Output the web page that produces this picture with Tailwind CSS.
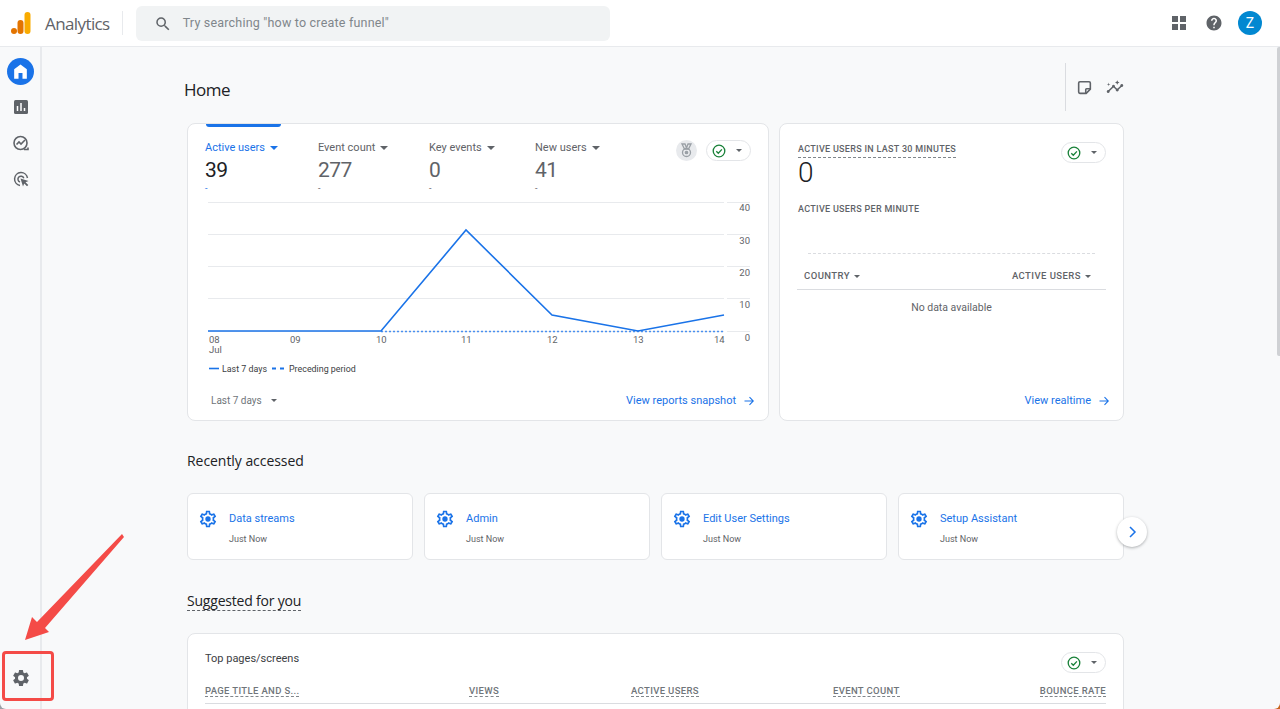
<!DOCTYPE html>
<html>
<head>
    <meta charset="UTF-8">
    <meta name="viewport" content="width=device-width, initial-scale=1.0">
    <title>Analytics Home</title>
    <script src="https://cdn.jsdelivr.net/npm/@tailwindcss/browser@4"></script>
</head>
<body class="bg-white font-['Roboto',sans-serif] text-[#5f6368] h-[709px] overflow-hidden relative">
    <!-- top bar -->
    <header class="h-[47px] bg-white border-b border-[#e8eaed] flex items-center pl-[11px] pr-[18px]">
        <svg class="w-[20px] h-[24px] mb-[1px]" viewBox="0 0 20 24">
            <rect x="13.5" y="1" width="6" height="22" rx="3" fill="#f9ab00"/>
            <rect x="6.5" y="9" width="6" height="14" rx="3" fill="#e37400"/>
            <circle cx="3" cy="20" r="3" fill="#e37400"/>
        </svg>
        <span class="ml-[14px] text-[17px] text-[#5f6368] font-['Open_Sans',sans-serif] leading-none tracking-[-0.6px]">Analytics</span>
        <div class="w-px h-[24px] bg-[#e8eaed] ml-[12px]"></div>
        <div class="ml-[13px] mt-[1px] w-[474px] h-[35px] bg-[#f1f3f4] rounded-[6px] flex items-center pl-[18px]">
            <svg class="w-[18px] h-[18px]" viewBox="0 0 24 24" fill="#5f6368"><path d="M15.5 14h-.79l-.28-.27A6.47 6.47 0 0 0 16 9.5 6.5 6.5 0 1 0 9.5 16c1.61 0 3.09-.59 4.23-1.57l.27.28v.79l5 4.99L20.49 19l-4.99-5zm-6 0C7.01 14 5 11.99 5 9.5S7.01 5 9.5 5 14 7.01 14 9.5 11.99 14 9.5 14z"/></svg>
            <span class="ml-[11px] text-[12.5px] tracking-[0.2px] text-[#80868b]">Try searching "how to create funnel"</span>
        </div>
        <div class="ml-auto flex items-center">
            <svg class="w-[16px] h-[16px]" viewBox="0 0 16 16" fill="#5f6368">
                <rect x="1" y="1" width="6" height="6"/><rect x="9" y="1" width="6" height="6"/><rect x="1" y="9" width="6" height="6"/><rect x="9" y="9" width="6" height="6"/>
            </svg>
            <svg class="w-[18px] h-[18px] ml-[18px]" viewBox="0 0 24 24" fill="#5f6368"><path d="M12 2C6.48 2 2 6.48 2 12s4.48 10 10 10 10-4.48 10-10S17.52 2 12 2zm1 17h-2v-2h2v2zm2.07-7.75-.9.92C13.45 12.9 13 13.5 13 15h-2v-.5c0-1.1.45-2.1 1.17-2.83l1.24-1.26c.37-.36.59-.86.59-1.41 0-1.1-.9-2-2-2s-2 .9-2 2H8c0-2.21 1.79-4 4-4s4 1.79 4 4c0 .88-.36 1.68-.93 2.25z"/></svg>
            <div class="w-[24px] h-[24px] ml-[15px] rounded-full bg-[#0288d1] text-white text-[14px] flex items-center justify-center">Z</div>
        </div>
    </header>

    <div class="flex h-[662px]">
        <!-- left rail -->
        <aside class="w-[42px] bg-[#f8f9fa] border-r-2 border-[#e8eaed] flex flex-col items-center pt-[11px] pb-[21px] pl-[1px]">
            <div class="w-[27px] h-[27px] rounded-full bg-[#1a73e8] flex items-center justify-center">
                <svg class="w-[19px] h-[19px]" viewBox="0 0 24 24" fill="#fff"><path d="M12 3 4 9v12h5.5v-7h5v7H20V9z"/></svg>
            </div>
            <svg class="w-[18px] h-[18px] mt-[13px]" viewBox="0 0 18 18"><rect x="2" y="2" width="14" height="14" rx="1.5" fill="#5f6368"/><path d="M5.5 8v5M9 5v8M12.5 10v3" stroke="#fff" stroke-width="1.5"/></svg>
            <svg class="w-[18px] h-[18px] mt-[18px]" viewBox="0 0 18 18" fill="none" stroke="#5f6368" stroke-width="1.6"><circle cx="8.5" cy="9" r="6.5"/><path d="m4.5 10.5 2.5-2.5 2 2 4-4"/><path d="M12 15.5h4v-2" /></svg>
            <svg class="w-[18px] h-[18px] mt-[18px]" viewBox="0 0 18 18" fill="none" stroke="#5f6368" stroke-width="1.5"><path d="M8 15.5A6.5 6.5 0 1 1 15.5 8"/><path d="M8 12a3 3 0 1 1 3.8-3.8"/><path d="m8.5 8.5 8 2.5-3 1.2 2.8 2.8-1.3 1.3-2.8-2.8-1.2 3z" fill="#5f6368" stroke="none"/></svg>
            <svg class="w-[20px] h-[20px] mt-auto" viewBox="0 0 24 24" fill="#5f6368"><path d="M19.14 12.94c.04-.3.06-.61.06-.94 0-.32-.02-.64-.07-.94l2.03-1.58a.49.49 0 0 0 .12-.61l-1.92-3.32a.488.488 0 0 0-.59-.22l-2.39.96c-.5-.38-1.03-.7-1.62-.94l-.36-2.54a.484.484 0 0 0-.48-.41h-3.84c-.24 0-.43.17-.47.41l-.36 2.54c-.59.24-1.13.57-1.62.94l-2.39-.96c-.22-.08-.47 0-.59.22L2.74 8.87c-.12.21-.08.47.12.61l2.03 1.58c-.05.3-.09.63-.09.94s.02.64.07.94l-2.03 1.58a.49.49 0 0 0-.12.61l1.92 3.32c.12.22.37.29.59.22l2.39-.96c.5.38 1.03.7 1.62.94l.36 2.54c.05.24.24.41.48.41h3.84c.24 0 .44-.17.47-.41l.36-2.54c.59-.24 1.13-.56 1.62-.94l2.39.96c.22.08.47 0 .59-.22l1.92-3.32c.12-.22.07-.47-.12-.61l-2.01-1.58zM12 15.6A3.6 3.6 0 1 1 12 8.4a3.6 3.6 0 0 1 0 7.2z"/></svg>
        </aside>

        <!-- main -->
        <main class="flex-1 bg-[#f8f9fa] pl-[145px] w-[1238px] overflow-hidden">
            <div class="w-[937px] h-[76px] flex items-start">
                <h1 class="text-[17px] leading-[24px] text-[#202124] font-['Open_Sans',sans-serif] -ml-[3px] mt-[31px] tracking-[-0.5px]">Home</h1>
                <div class="ml-auto w-[59px] h-[48px] mt-[16px] border-l border-[#dadce0] flex items-center pl-[11px] gap-[14px]">
                    <svg class="w-[15px] h-[15px]" viewBox="0 0 18 18" fill="none" stroke="#5f6368" stroke-width="1.9"><path d="M3.5 2h11a1.5 1.5 0 0 1 1.5 1.5V11l-5 5H3.5A1.5 1.5 0 0 1 2 14.5v-11A1.5 1.5 0 0 1 3.5 2z"/><path d="M16 10.5h-4.5a1 1 0 0 0-1 1V16"/></svg>
                    <svg class="w-[18px] h-[18px]" viewBox="0 0 24 24" fill="#5f6368"><path d="M21 8c-1.45 0-2.26 1.44-1.93 2.51l-3.55 3.56c-.3-.09-.74-.09-1.04 0l-2.55-2.55C12.27 10.45 11.46 9 10 9c-1.45 0-2.27 1.44-1.93 2.52l-4.56 4.55C2.44 15.74 1 16.55 1 18c0 1.1.9 2 2 2 1.45 0 2.26-1.44 1.93-2.51l4.55-4.56c.3.09.74.09 1.04 0l2.55 2.55C12.73 16.55 13.54 18 15 18c1.45 0 2.27-1.44 1.93-2.52l3.56-3.55c1.07.33 2.51-.48 2.51-1.93 0-1.1-.9-2-2-2z"/><path d="m15 9 .94-2.07L18 6l-2.06-.93L15 3l-.92 2.07L12 6l2.08.93zM3.5 11 4 9l2-.5L4 8l-.5-2L3 8l-2 .5L3 9z"/></svg>
                </div>
            </div>

            <!-- overview cards -->
            <div class="flex gap-[10px]">
                <section class="w-[582px] h-[298px] bg-white border border-[#e3e5e8] rounded-[8px] relative shrink-0">
                    <div class="absolute left-[18px] top-0 w-[75px] h-[3px] bg-[#1a73e8] rounded-b-[3px]"></div>
                    <div class="flex items-start pl-[17px] pt-[17px]">
                        <div class="w-[113px]">
                            <div class="text-[11px] leading-[13px] text-[#1a73e8] flex items-center">Active users<span class="ml-[5px] border-x-[4px] border-t-[4px] border-x-transparent border-t-[#1a73e8]"></span></div>
                            <div class="text-[21px] leading-[26px] mt-[3px] text-[#202124] tracking-[-0.5px]">39</div>
                            <div class="text-[9px] leading-[10px] text-[#1a73e8]">-</div>
                        </div>
                        <div class="w-[111px]">
                            <div class="text-[11px] leading-[13px] flex items-center">Event count<span class="ml-[5px] border-x-[4px] border-t-[4px] border-x-transparent border-t-[#5f6368]"></span></div>
                            <div class="text-[21px] leading-[26px] mt-[3px] tracking-[-0.5px]">277</div>
                            <div class="text-[9px] leading-[10px]">-</div>
                        </div>
                        <div class="w-[106px]">
                            <div class="text-[11px] leading-[13px] flex items-center">Key events<span class="ml-[5px] border-x-[4px] border-t-[4px] border-x-transparent border-t-[#5f6368]"></span></div>
                            <div class="text-[21px] leading-[26px] mt-[3px] tracking-[-0.5px]">0</div>
                            <div class="text-[9px] leading-[10px]">-</div>
                        </div>
                        <div class="w-[100px]">
                            <div class="text-[11px] leading-[13px] flex items-center">New users<span class="ml-[5px] border-x-[4px] border-t-[4px] border-x-transparent border-t-[#5f6368]"></span></div>
                            <div class="text-[21px] leading-[26px] mt-[3px] tracking-[-0.5px]">41</div>
                            <div class="text-[9px] leading-[10px]">-</div>
                        </div>
                        <div class="ml-auto mr-[17px] flex items-center gap-[9px] -mt-[1px]">
                            <div class="w-[21px] h-[21px] rounded-full bg-[#e8eaed] flex items-center justify-center">
                                <svg class="w-[13px] h-[15px]" viewBox="0 0 13 15" fill="none" stroke="#9aa0a6" stroke-width="1.3"><path d="M2 1h3l1.5 4L8 1h3L8.5 6h-4z"/><circle cx="6.5" cy="9.5" r="4"/><circle cx="6.5" cy="9.5" r="1.2" fill="#9aa0a6"/></svg>
                            </div>
                            <div class="w-[45px] h-[21px] rounded-full bg-white border border-[#e3e5e8] flex items-center pl-[5px]">
                                <svg class="w-[14px] h-[14px]" viewBox="0 0 14 14" fill="none" stroke="#188038" stroke-width="1.3"><circle cx="7" cy="7" r="5.8"/><path d="m4.3 7.2 2 2 3.6-3.8"/></svg>
                                <span class="ml-[10px] border-x-[3.5px] border-t-[3.5px] border-x-transparent border-t-[#5f6368]"></span>
                            </div>
                        </div>
                    </div>
                    <svg class="absolute left-0 top-0" width="580" height="256" font-family="Roboto, sans-serif" font-size="9.5" fill="#5f6368">
                        <g stroke="#e8eaed" stroke-width="1">
                            <path d="M20 78.5H536M20 110.5H536M20 142.5H536M20 174.5H536M20 207.5H536"/>
                            <path d="M539 78.5H562M539 110.5H562M539 142.5H562M539 174.5H562M539 207.5H562"/>
                        </g>
                        <path d="M193 207.5H536" fill="none" stroke="#4a90f0" stroke-width="1.4" stroke-dasharray="2 2"/>
                        <path d="M20 207H193L278 106 364 191 450 207 536 191" fill="none" stroke="#1a73e8" stroke-width="1.6"/>
                        <text x="562" y="87" text-anchor="end">40</text>
                        <text x="562" y="120" text-anchor="end">30</text>
                        <text x="562" y="152" text-anchor="end">20</text>
                        <text x="562" y="184" text-anchor="end">10</text>
                        <text x="562" y="217" text-anchor="end">0</text>
                        <text x="21" y="219">08</text>
                        <text x="21" y="229">Jul</text>
                        <text x="102" y="219">09</text>
                        <text x="188" y="219">10</text>
                        <text x="273" y="219">11</text>
                        <text x="359" y="219">12</text>
                        <text x="445" y="219">13</text>
                        <text x="526" y="219">14</text>
                        <path d="M21 244.5h10" stroke="#1a73e8" stroke-width="1.6"/>
                        <text x="34" y="248" fill="#3c4043" font-size="8.9">Last 7 days</text>
                        <path d="M84 244.5h4M92 244.5h4" stroke="#1a73e8" stroke-width="2"/>
                        <text x="101" y="248" fill="#3c4043" font-size="8.9">Preceding period</text>
                    </svg>
                    <div class="absolute left-[23px] right-[14px] bottom-[11px] flex items-center justify-between">
                        <div class="flex items-center text-[10px] text-[#70757a]">Last 7 days<span class="ml-[9px] border-x-[3.5px] border-t-[3.5px] border-x-transparent border-t-[#5f6368]"></span></div>
                        <a class="flex items-center text-[11px] text-[#1a73e8]">View reports snapshot
                            <svg class="w-[10px] h-[10px] ml-[8px]" viewBox="0 0 10 10" fill="none" stroke="#1a73e8" stroke-width="1.1"><path d="M0.5 5h8.5M5.5 1.2 9.3 5 5.5 8.8"/></svg>
                        </a>
                    </div>
                </section>

                <section class="w-[345px] h-[298px] bg-white border border-[#e3e5e8] rounded-[8px] relative shrink-0">
                    <div class="flex justify-between pl-[18px] pr-[17px] pt-[19px]">
                        <div>
                            <div class="text-[9px] leading-[13px] font-medium tracking-[0.3px] border-b border-dashed border-[#80868b] pb-[1px] w-fit">ACTIVE USERS IN LAST 30 MINUTES</div>
                            <div class="text-[28px] leading-[30px] text-[#202124] font-light">0</div>
                            <div class="text-[9px] leading-[13px] font-medium tracking-[0.3px] mt-[15px]">ACTIVE USERS PER MINUTE</div>
                        </div>
                        <div class="w-[45px] h-[21px] -mt-[1px] rounded-full bg-white border border-[#e3e5e8] flex items-center pl-[5px]">
                            <svg class="w-[14px] h-[14px]" viewBox="0 0 14 14" fill="none" stroke="#188038" stroke-width="1.3"><circle cx="7" cy="7" r="5.8"/><path d="m4.3 7.2 2 2 3.6-3.8"/></svg>
                            <span class="ml-[10px] border-x-[3.5px] border-t-[3.5px] border-x-transparent border-t-[#5f6368]"></span>
                        </div>
                    </div>
                    <div class="mx-[28px] mt-[37px] border-t border-dashed border-[#dadce0]"></div>
                    <div class="mx-[17px] mt-[16px] pl-[7px] pr-[15px] pb-[7px] flex justify-between border-b border-[#dadce0] text-[9.5px] font-medium tracking-[0.45px] leading-[12px]">
                        <span class="flex items-center">COUNTRY<span class="ml-[4px] border-x-[3px] border-t-[3px] border-x-transparent border-t-[#5f6368]"></span></span>
                        <span class="flex items-center">ACTIVE USERS<span class="ml-[4px] border-x-[3px] border-t-[3px] border-x-transparent border-t-[#5f6368]"></span></span>
                    </div>
                    <div class="text-center text-[10.5px] mt-[10px]">No data available</div>
                    <a class="absolute right-[14px] bottom-[11px] flex items-center text-[11px] text-[#1a73e8]">View realtime
                        <svg class="w-[10px] h-[10px] ml-[8px]" viewBox="0 0 10 10" fill="none" stroke="#1a73e8" stroke-width="1.1"><path d="M0.5 5h8.5M5.5 1.2 9.3 5 5.5 8.8"/></svg>
                    </a>
                </section>
            </div>

            <!-- recently accessed -->
            <h2 class="text-[14px] leading-[18px] text-[#202124] font-['Open_Sans',sans-serif] mt-[31px] tracking-[-0.05px]">Recently accessed</h2>
            <div class="flex gap-[11px] mt-[23px] relative w-[937px]">
                <div class="w-[226px] h-[67px] bg-white border border-[#e3e5e8] rounded-[6px] flex pl-[10px] pt-[16px]">
                    <svg class="w-[20px] h-[20px] -mt-[1px] shrink-0" viewBox="0 0 24 24" fill="#1a73e8"><path d="M19.43 12.98c.04-.32.07-.64.07-.98 0-.34-.03-.66-.07-.98l2.11-1.65c.19-.15.24-.42.12-.64l-2-3.46a.5.5 0 0 0-.61-.22l-2.49 1c-.52-.4-1.08-.73-1.69-.98l-.38-2.65A.488.488 0 0 0 14 2h-4c-.25 0-.46.18-.49.42l-.38 2.65c-.61.25-1.17.59-1.69.98l-2.49-1a.566.566 0 0 0-.18-.03c-.17 0-.34.09-.43.25l-2 3.46c-.13.22-.07.49.12.64l2.11 1.65c-.04.32-.07.65-.07.98 0 .33.03.66.07.98l-2.11 1.65c-.19.15-.24.42-.12.64l2 3.46a.5.5 0 0 0 .61.22l2.49-1c.52.4 1.08.73 1.69.98l.38 2.65c.03.24.24.42.49.42h4c.25 0 .46-.18.49-.42l.38-2.65c.61-.25 1.17-.59 1.69-.98l2.49 1c.06.02.12.03.18.03.17 0 .34-.09.43-.25l2-3.46c.12-.22.07-.49-.12-.64l-2.11-1.65zm-1.98-1.71c.04.31.05.52.05.73 0 .21-.02.43-.05.73l-.14 1.13.89.7 1.08.84-.7 1.21-1.27-.51-1.04-.42-.9.68c-.43.32-.84.56-1.25.73l-1.06.43-.16 1.13-.2 1.35h-1.4l-.19-1.35-.16-1.13-1.06-.43c-.43-.18-.83-.41-1.23-.71l-.91-.7-1.06.43-1.27.51-.7-1.21 1.08-.84.89-.7-.14-1.13c-.03-.31-.05-.54-.05-.74s.02-.43.05-.73l.14-1.13-.89-.7-1.08-.84.7-1.21 1.27.51 1.04.42.9-.68c.43-.32.84-.56 1.25-.73l1.06-.43.16-1.13.2-1.35h1.39l.19 1.35.16 1.13 1.06.43c.43.18.83.41 1.23.71l.91.7 1.06-.43 1.27-.51.7 1.21-1.07.85-.89.7.14 1.13z"/><circle cx="12" cy="12" r="3.2"/></svg>
                    <div class="ml-[11px]">
                        <div class="text-[11px] leading-[17px] text-[#1a73e8]">Data streams</div>
                        <div class="text-[9px] leading-[12px] mt-[6px]">Just Now</div>
                    </div>
                </div>
                <div class="w-[226px] h-[67px] bg-white border border-[#e3e5e8] rounded-[6px] flex pl-[10px] pt-[16px]">
                    <svg class="w-[20px] h-[20px] -mt-[1px] shrink-0" viewBox="0 0 24 24" fill="#1a73e8"><path d="M19.43 12.98c.04-.32.07-.64.07-.98 0-.34-.03-.66-.07-.98l2.11-1.65c.19-.15.24-.42.12-.64l-2-3.46a.5.5 0 0 0-.61-.22l-2.49 1c-.52-.4-1.08-.73-1.69-.98l-.38-2.65A.488.488 0 0 0 14 2h-4c-.25 0-.46.18-.49.42l-.38 2.65c-.61.25-1.17.59-1.69.98l-2.49-1a.566.566 0 0 0-.18-.03c-.17 0-.34.09-.43.25l-2 3.46c-.13.22-.07.49.12.64l2.11 1.65c-.04.32-.07.65-.07.98 0 .33.03.66.07.98l-2.11 1.65c-.19.15-.24.42-.12.64l2 3.46a.5.5 0 0 0 .61.22l2.49-1c.52.4 1.08.73 1.69.98l.38 2.65c.03.24.24.42.49.42h4c.25 0 .46-.18.49-.42l.38-2.65c.61-.25 1.17-.59 1.69-.98l2.49 1c.06.02.12.03.18.03.17 0 .34-.09.43-.25l2-3.46c.12-.22.07-.49-.12-.64l-2.11-1.65zm-1.98-1.71c.04.31.05.52.05.73 0 .21-.02.43-.05.73l-.14 1.13.89.7 1.08.84-.7 1.21-1.27-.51-1.04-.42-.9.68c-.43.32-.84.56-1.25.73l-1.06.43-.16 1.13-.2 1.35h-1.4l-.19-1.35-.16-1.13-1.06-.43c-.43-.18-.83-.41-1.23-.71l-.91-.7-1.06.43-1.27.51-.7-1.21 1.08-.84.89-.7-.14-1.13c-.03-.31-.05-.54-.05-.74s.02-.43.05-.73l.14-1.13-.89-.7-1.08-.84.7-1.21 1.27.51 1.04.42.9-.68c.43-.32.84-.56 1.25-.73l1.06-.43.16-1.13.2-1.35h1.39l.19 1.35.16 1.13 1.06.43c.43.18.83.41 1.23.71l.91.7 1.06-.43 1.27-.51.7 1.21-1.07.85-.89.7.14 1.13z"/><circle cx="12" cy="12" r="3.2"/></svg>
                    <div class="ml-[11px]">
                        <div class="text-[11px] leading-[17px] text-[#1a73e8]">Admin</div>
                        <div class="text-[9px] leading-[12px] mt-[6px]">Just Now</div>
                    </div>
                </div>
                <div class="w-[226px] h-[67px] bg-white border border-[#e3e5e8] rounded-[6px] flex pl-[10px] pt-[16px]">
                    <svg class="w-[20px] h-[20px] -mt-[1px] shrink-0" viewBox="0 0 24 24" fill="#1a73e8"><path d="M19.43 12.98c.04-.32.07-.64.07-.98 0-.34-.03-.66-.07-.98l2.11-1.65c.19-.15.24-.42.12-.64l-2-3.46a.5.5 0 0 0-.61-.22l-2.49 1c-.52-.4-1.08-.73-1.69-.98l-.38-2.65A.488.488 0 0 0 14 2h-4c-.25 0-.46.18-.49.42l-.38 2.65c-.61.25-1.17.59-1.69.98l-2.49-1a.566.566 0 0 0-.18-.03c-.17 0-.34.09-.43.25l-2 3.46c-.13.22-.07.49.12.64l2.11 1.65c-.04.32-.07.65-.07.98 0 .33.03.66.07.98l-2.11 1.65c-.19.15-.24.42-.12.64l2 3.46a.5.5 0 0 0 .61.22l2.49-1c.52.4 1.08.73 1.69.98l.38 2.65c.03.24.24.42.49.42h4c.25 0 .46-.18.49-.42l.38-2.65c.61-.25 1.17-.59 1.69-.98l2.49 1c.06.02.12.03.18.03.17 0 .34-.09.43-.25l2-3.46c.12-.22.07-.49-.12-.64l-2.11-1.65zm-1.98-1.71c.04.31.05.52.05.73 0 .21-.02.43-.05.73l-.14 1.13.89.7 1.08.84-.7 1.21-1.27-.51-1.04-.42-.9.68c-.43.32-.84.56-1.25.73l-1.06.43-.16 1.13-.2 1.35h-1.4l-.19-1.35-.16-1.13-1.06-.43c-.43-.18-.83-.41-1.23-.71l-.91-.7-1.06.43-1.27.51-.7-1.21 1.08-.84.89-.7-.14-1.13c-.03-.31-.05-.54-.05-.74s.02-.43.05-.73l.14-1.13-.89-.7-1.08-.84.7-1.21 1.27.51 1.04.42.9-.68c.43-.32.84-.56 1.25-.73l1.06-.43.16-1.13.2-1.35h1.39l.19 1.35.16 1.13 1.06.43c.43.18.83.41 1.23.71l.91.7 1.06-.43 1.27-.51.7 1.21-1.07.85-.89.7.14 1.13z"/><circle cx="12" cy="12" r="3.2"/></svg>
                    <div class="ml-[11px]">
                        <div class="text-[11px] leading-[17px] text-[#1a73e8]">Edit User Settings</div>
                        <div class="text-[9px] leading-[12px] mt-[6px]">Just Now</div>
                    </div>
                </div>
                <div class="w-[226px] h-[67px] bg-white border border-[#e3e5e8] rounded-[6px] flex pl-[10px] pt-[16px]">
                    <svg class="w-[20px] h-[20px] -mt-[1px] shrink-0" viewBox="0 0 24 24" fill="#1a73e8"><path d="M19.43 12.98c.04-.32.07-.64.07-.98 0-.34-.03-.66-.07-.98l2.11-1.65c.19-.15.24-.42.12-.64l-2-3.46a.5.5 0 0 0-.61-.22l-2.49 1c-.52-.4-1.08-.73-1.69-.98l-.38-2.65A.488.488 0 0 0 14 2h-4c-.25 0-.46.18-.49.42l-.38 2.65c-.61.25-1.17.59-1.69.98l-2.49-1a.566.566 0 0 0-.18-.03c-.17 0-.34.09-.43.25l-2 3.46c-.13.22-.07.49.12.64l2.11 1.65c-.04.32-.07.65-.07.98 0 .33.03.66.07.98l-2.11 1.65c-.19.15-.24.42-.12.64l2 3.46a.5.5 0 0 0 .61.22l2.49-1c.52.4 1.08.73 1.69.98l.38 2.65c.03.24.24.42.49.42h4c.25 0 .46-.18.49-.42l.38-2.65c.61-.25 1.17-.59 1.69-.98l2.49 1c.06.02.12.03.18.03.17 0 .34-.09.43-.25l2-3.46c.12-.22.07-.49-.12-.64l-2.11-1.65zm-1.98-1.71c.04.31.05.52.05.73 0 .21-.02.43-.05.73l-.14 1.13.89.7 1.08.84-.7 1.21-1.27-.51-1.04-.42-.9.68c-.43.32-.84.56-1.25.73l-1.06.43-.16 1.13-.2 1.35h-1.4l-.19-1.35-.16-1.13-1.06-.43c-.43-.18-.83-.41-1.23-.71l-.91-.7-1.06.43-1.27.51-.7-1.21 1.08-.84.89-.7-.14-1.13c-.03-.31-.05-.54-.05-.74s.02-.43.05-.73l.14-1.13-.89-.7-1.08-.84.7-1.21 1.27.51 1.04.42.9-.68c.43-.32.84-.56 1.25-.73l1.06-.43.16-1.13.2-1.35h1.39l.19 1.35.16 1.13 1.06.43c.43.18.83.41 1.23.71l.91.7 1.06-.43 1.27-.51.7 1.21-1.07.85-.89.7.14 1.13z"/><circle cx="12" cy="12" r="3.2"/></svg>
                    <div class="ml-[11px]">
                        <div class="text-[11px] leading-[17px] text-[#1a73e8]">Setup Assistant</div>
                        <div class="text-[9px] leading-[12px] mt-[6px]">Just Now</div>
                    </div>
                </div>
                <div class="absolute left-[930px] top-[24px] w-[30px] h-[30px] rounded-full bg-white shadow-[0_1px_3px_rgba(60,64,67,0.4)] flex items-center justify-center">
                    <svg class="w-[10px] h-[12px]" viewBox="0 0 10 12" fill="none" stroke="#1a73e8" stroke-width="1.5"><path d="m3 1 5 5-5 5"/></svg>
                </div>
            </div>

            <!-- suggested -->
            <h2 class="w-fit text-[14px] leading-[18px] text-[#202124] font-['Open_Sans',sans-serif] mt-[32px] border-b border-dashed border-[#5f6368] tracking-[-0.2px]">Suggested for you</h2>
            <section class="w-[937px] h-[120px] bg-white border border-[#e3e5e8] rounded-[8px] mt-[22px] pl-[17px] pr-[17px] pt-[18px]">
                <div class="flex justify-between items-start">
                    <div class="text-[11px] leading-[14px] text-[#3c4043]">Top pages/screens</div>
                    <div class="w-[45px] h-[21px] rounded-full bg-white border border-[#e3e5e8] flex items-center pl-[5px]">
                        <svg class="w-[14px] h-[14px]" viewBox="0 0 14 14" fill="none" stroke="#188038" stroke-width="1.3"><circle cx="7" cy="7" r="5.8"/><path d="m4.3 7.2 2 2 3.6-3.8"/></svg>
                        <span class="ml-[10px] border-x-[3.5px] border-t-[3.5px] border-x-transparent border-t-[#5f6368]"></span>
                    </div>
                </div>
                <div class="flex text-[9.5px] leading-[12px] font-medium tracking-[0.35px] text-[#70757a] mt-[12px] border-b border-[#dadce0] pb-[6px]">
                    <span class="w-[264px]"><span class="border-b border-dashed border-[#80868b]">PAGE TITLE AND S...</span></span>
                    <span class="w-[162px]"><span class="border-b border-dashed border-[#80868b]">VIEWS</span></span>
                    <span class="w-[202px]"><span class="border-b border-dashed border-[#80868b]">ACTIVE USERS</span></span>
                    <span class="w-[150px]"><span class="border-b border-dashed border-[#80868b]">EVENT COUNT</span></span>
                    <span class="ml-auto"><span class="border-b border-dashed border-[#80868b]">BOUNCE RATE</span></span>
                </div>
            </section>
        </main>
    </div>

    <!-- scrollbar thumb -->
    <div class="absolute right-0 top-[47px] w-[3px] h-[309px] bg-[#cfd1d4] rounded-l-[2px]"></div>

    <!-- window corners of the original capture -->
    <div class="absolute right-0 bottom-0 w-[6px] h-[6px] bg-[#c8641e]"><div class="w-full h-full bg-[#f8f9fa] rounded-br-[6px]"></div></div>
    <div class="absolute left-0 bottom-0 w-[6px] h-[6px] bg-[#9aa0a6]"><div class="w-full h-full bg-[#f8f9fa] rounded-bl-[6px]"></div></div>

    <!-- red annotation over the page -->
    <div class="absolute left-[2px] top-[651px] w-[52px] h-[50px] border-[3px] border-[#f44b47] rounded-[4px]"></div>
    <svg class="absolute left-[20px] top-[528px]" width="110" height="116" viewBox="0 0 110 116">
        <path d="M102 6 104 9 25 100 29 104 5 112 12 89 17 94z" fill="#f44b47"/>
    </svg>
</body>
</html>
